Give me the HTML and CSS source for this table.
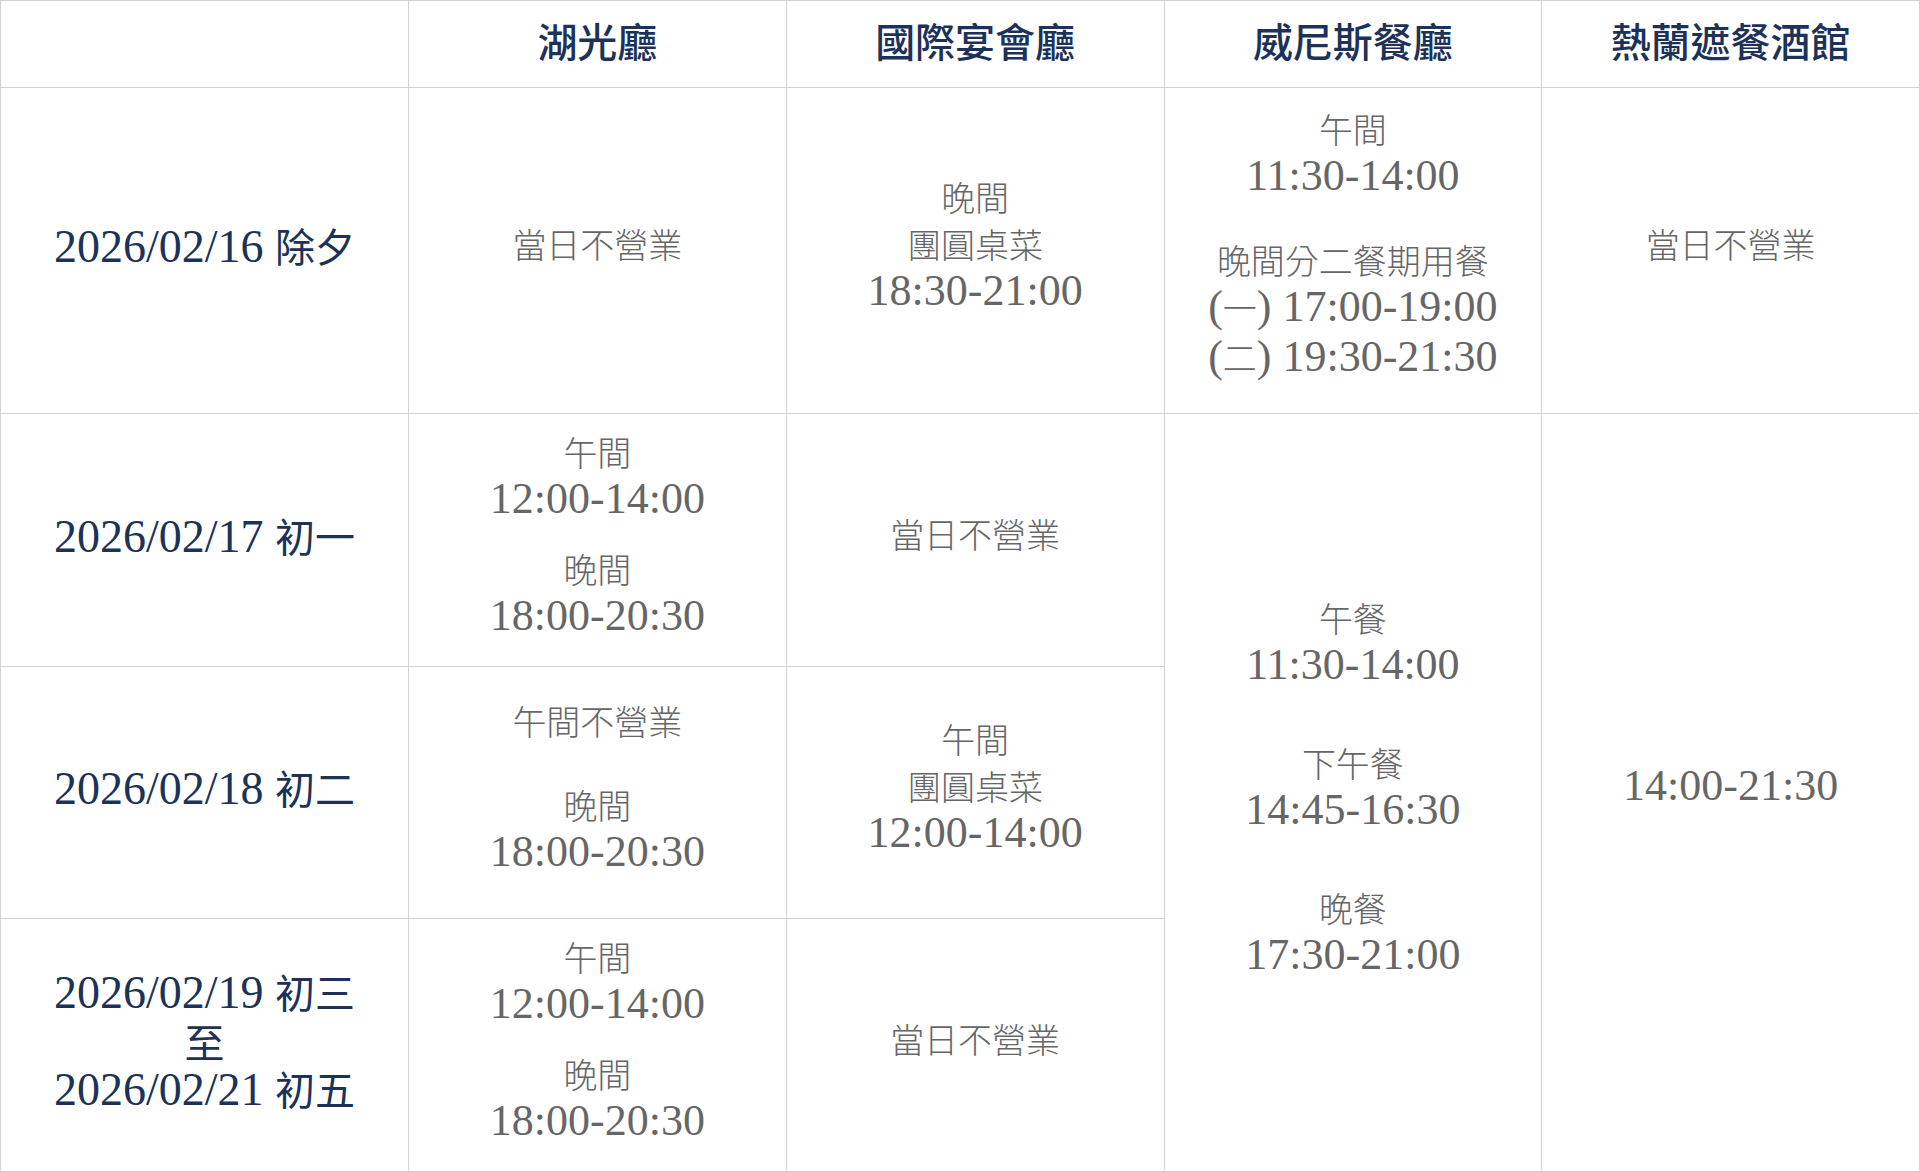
FILE: index.html
```html
<!DOCTYPE html>
<html lang="zh-Hant">
<head>
<meta charset="utf-8">
<title>春節餐廳營業時間</title>
<link rel="stylesheet" href="styles.css">
</head>
<body>
<table class="schedule">
  <colgroup>
    <col class="c-date">
    <col class="c-venue">
    <col class="c-venue">
    <col class="c-venue">
    <col class="c-venue">
  </colgroup>
  <thead>
    <tr class="r-head">
      <th></th>
      <th>湖光廳</th>
      <th>國際宴會廳</th>
      <th>威尼斯餐廳</th>
      <th>熱蘭遮餐酒館</th>
    </tr>
  </thead>
  <tbody>
    <tr class="r1">
      <td class="date"><div class="dl">2026/02/16 <span class="cj">除夕</span></div></td>
      <td><div class="ln">當日不營業</div></td>
      <td>
        <div class="ln">晚間</div>
        <div class="ln">團圓桌菜</div>
        <div class="ln t">18:30-21:00</div>
      </td>
      <td>
        <div class="ln">午間</div>
        <div class="ln t">11:30-14:00</div>
        <div class="ln gap-m">晚間分二餐期用餐</div>
        <div class="ln t">(<span class="cj">一</span>) 17:00-19:00</div>
        <div class="ln t">(<span class="cj">二</span>) 19:30-21:30</div>
      </td>
      <td><div class="ln">當日不營業</div></td>
    </tr>
    <tr class="r2">
      <td class="date"><div class="dl">2026/02/17 <span class="cj">初一</span></div></td>
      <td>
        <div class="ln">午間</div>
        <div class="ln t">12:00-14:00</div>
        <div class="ln gap-s">晚間</div>
        <div class="ln t">18:00-20:30</div>
      </td>
      <td><div class="ln">當日不營業</div></td>
      <td rowspan="3">
        <div class="ln">午餐</div>
        <div class="ln t">11:30-14:00</div>
        <div class="ln gap-l">下午餐</div>
        <div class="ln t">14:45-16:30</div>
        <div class="ln gap-l">晚餐</div>
        <div class="ln t">17:30-21:00</div>
      </td>
      <td rowspan="3"><div class="ln t">14:00-21:30</div></td>
    </tr>
    <tr class="r3">
      <td class="date"><div class="dl">2026/02/18 <span class="cj">初二</span></div></td>
      <td>
        <div class="ln">午間不營業</div>
        <div class="ln gap-m">晚間</div>
        <div class="ln t">18:00-20:30</div>
      </td>
      <td>
        <div class="ln">午間</div>
        <div class="ln">團圓桌菜</div>
        <div class="ln t">12:00-14:00</div>
      </td>
    </tr>
    <tr class="r4">
      <td class="date">
        <div class="dl">2026/02/19 <span class="cj">初三</span></div>
        <div class="dl mid"><span class="cj">至</span></div>
        <div class="dl">2026/02/21 <span class="cj">初五</span></div>
      </td>
      <td>
        <div class="ln">午間</div>
        <div class="ln t">12:00-14:00</div>
        <div class="ln gap-s">晚間</div>
        <div class="ln t">18:00-20:30</div>
      </td>
      <td><div class="ln">當日不營業</div></td>
    </tr>
  </tbody>
</table>
</body>
</html>
```

FILE: styles.css
```css
html, body {
  margin: 0;
  padding: 0;
  background: #ffffff;
  overflow: hidden;
}

.schedule {
  width: 1920px;
  border-collapse: collapse;
  table-layout: fixed;
  font-family: "Liberation Serif", "Noto Sans CJK TC", serif;
  color: #666666;
}

.c-date {
  width: 408px;
}

.schedule th,
.schedule td {
  border: 1px solid #d2d2d2;
  text-align: center;
  vertical-align: middle;
  padding: 0 0 8px 0;
}

.schedule th {
  font-family: "Noto Sans CJK TC", sans-serif;
  font-size: 40px;
  font-weight: 500;
  color: #1c3258;
  line-height: 47px;
  padding-bottom: 8px;
}

.r-head { height: 87px; }
.r1 { height: 326px; }
.r2 { height: 253px; }
.r3 { height: 252px; }
.r4 { height: 253px; }

.ln {
  font-size: 34px;
  font-weight: 300;
  line-height: 47px;
}

.ln.t {
  font-size: 44px;
  font-weight: 400;
  line-height: 42px;
  padding-bottom: 5px;
}

.ln .cj {
  font-size: 34px;
  font-weight: 300;
}

.gap-s { margin-top: 23px; }
.gap-m { margin-top: 37px; }
.gap-l { margin-top: 51px; }

.date {
  color: #1c3258;
}

.dl {
  font-size: 46px;
  line-height: 51px;
}

.dl .cj {
  display: inline-block;
  font-family: "Noto Sans CJK TC", sans-serif;
  font-size: 40px;
  font-weight: 400;
  line-height: 46px;
}

.dl.mid {
  display: flex;
  justify-content: center;
  align-items: center;
  height: 46px;
}

.dl.mid .cj {
  line-height: 38px;
}
```
